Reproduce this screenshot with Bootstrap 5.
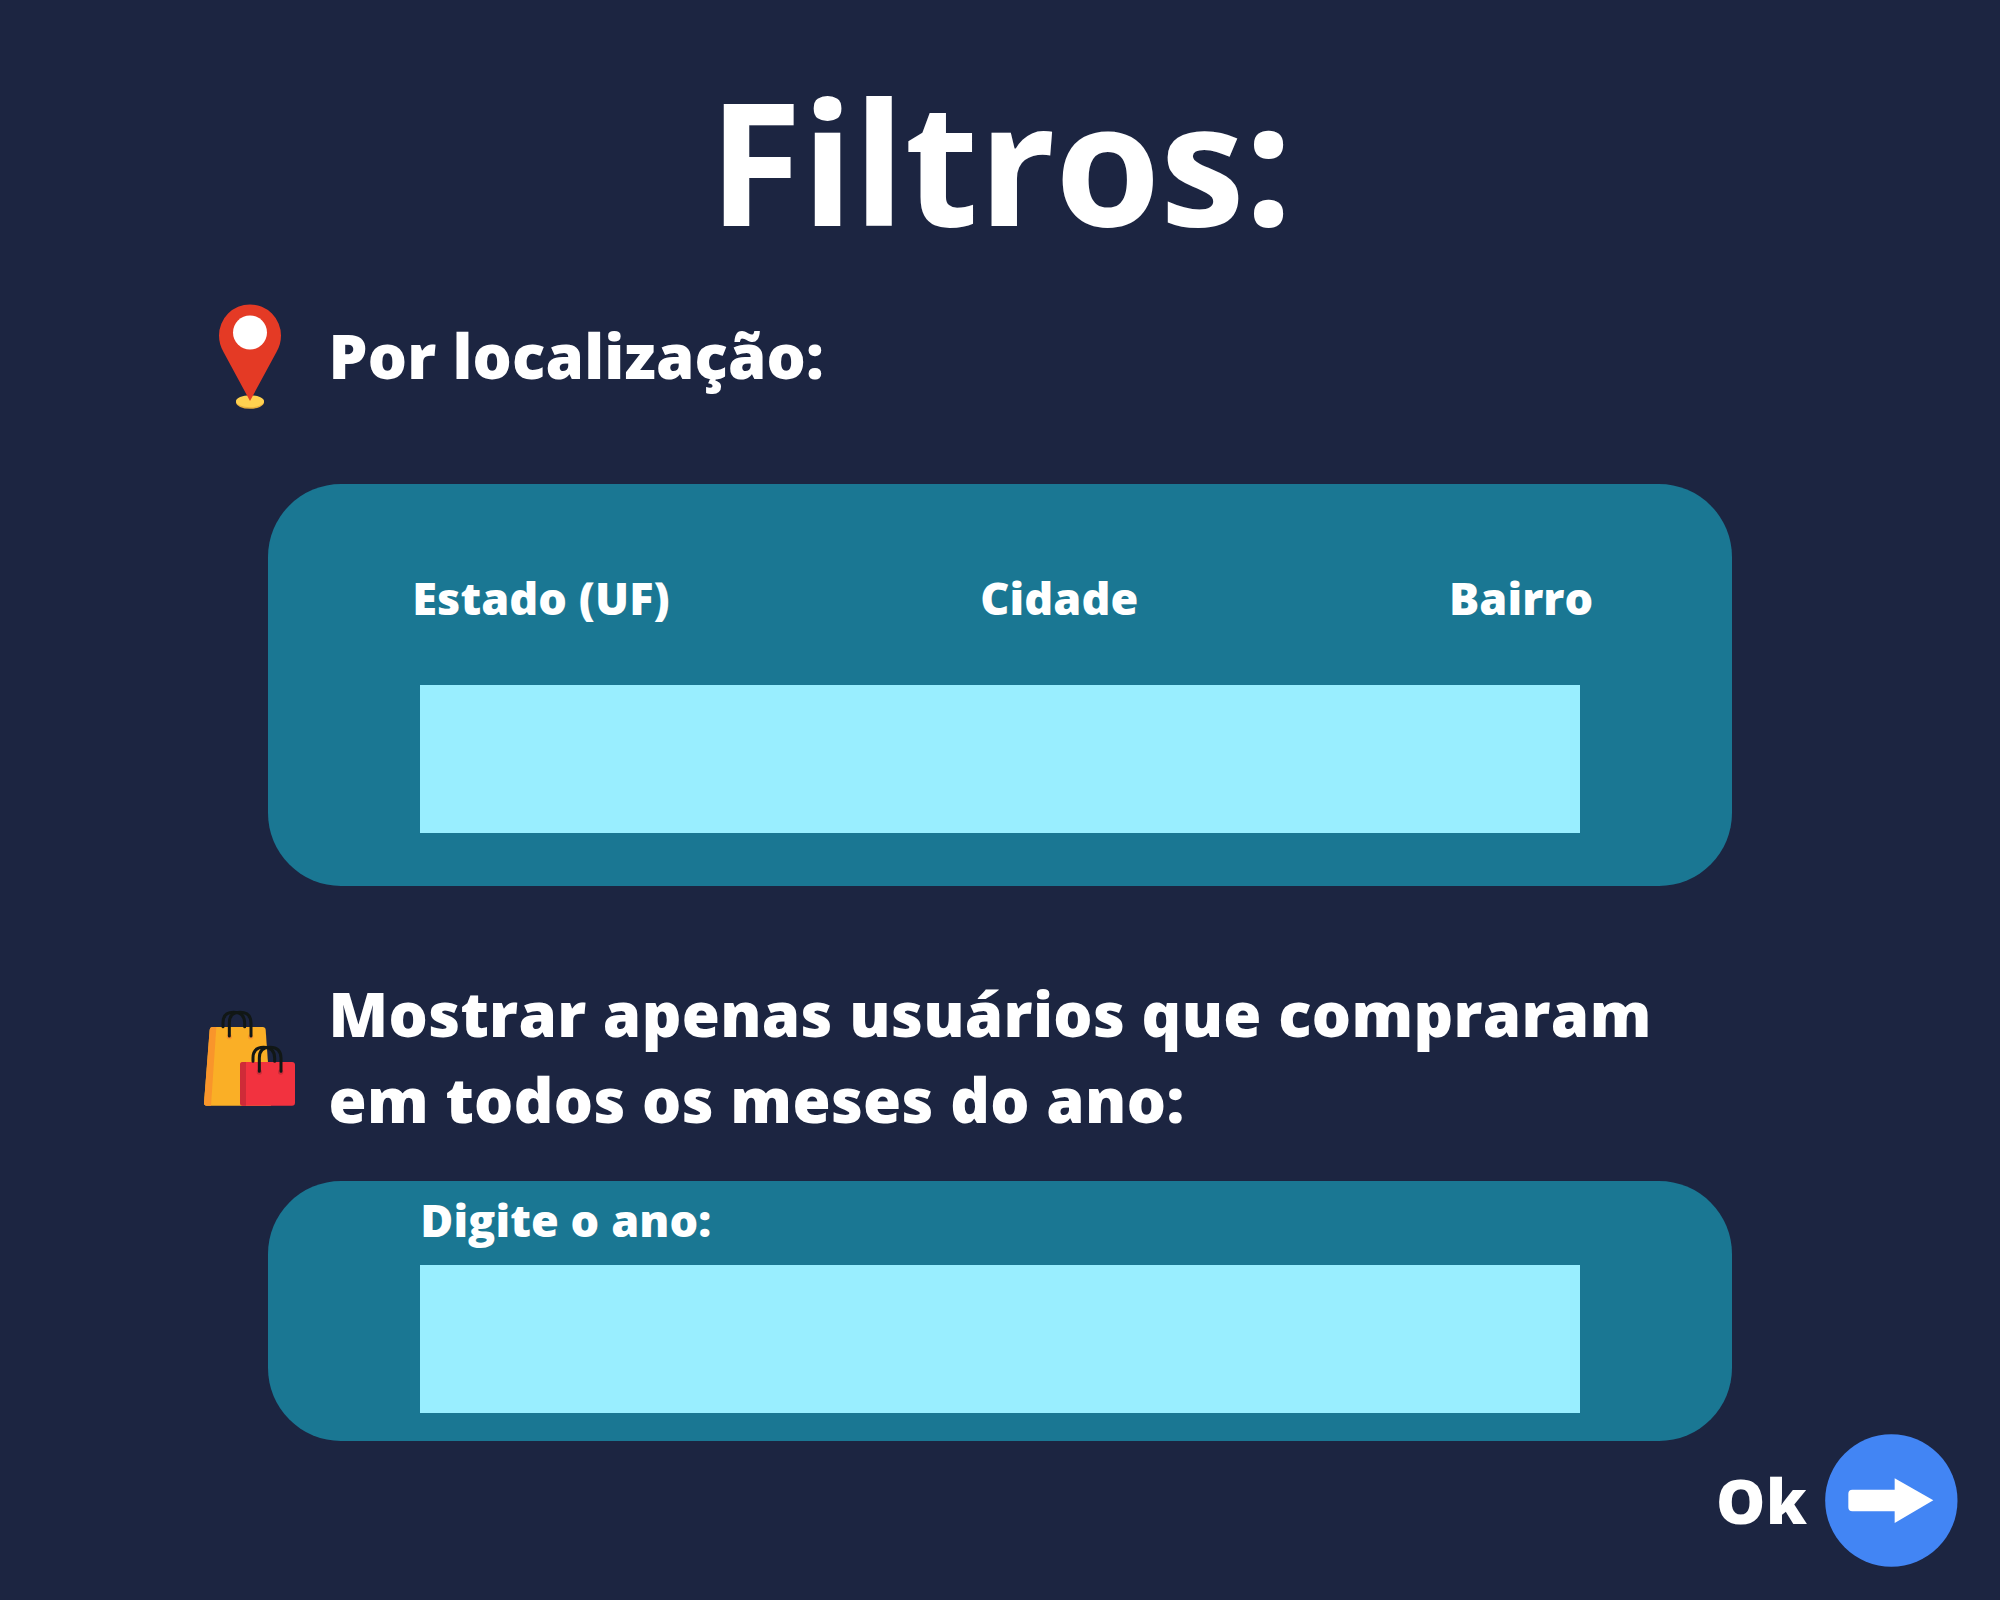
<!DOCTYPE html>
<html lang="pt-BR">
<head>
<meta charset="utf-8">
<title>Filtros</title>
<link href="https://cdn.jsdelivr.net/npm/bootstrap@5.3.0/dist/css/bootstrap.min.css" rel="stylesheet">
<style>
body{background:#1c2541;color:#fff;font-family:"Open Sans",sans-serif;width:2000px;height:1600px;overflow:hidden}
.page-title{font-size:170.5px;font-weight:700;line-height:200px;padding:60px 0 0 1px;letter-spacing:-.5px}
.section-head{height:224px;padding:44px 0 0 204px}
.section-head.second{height:295px;padding-top:84px}
.section-head svg{width:92px;flex:none}
.section-head h2{font-size:61.7px;font-weight:800;line-height:86px;margin:8px 0 0 32.5px;letter-spacing:.18px}
.section-head.second h2{margin-top:0;letter-spacing:.35px}
.bags-icon{margin-top:40px}
.panel{background:#1a7793;border-radius:73px;width:1464px;margin-left:268px;padding:0 151.7px 0 152.3px}
.panel-place{height:402px;padding-top:84px}
.panel-year{height:259.5px;padding-top:9px}
.field-label{font-size:45px;font-weight:800;line-height:60px;white-space:nowrap;letter-spacing:.08px}
.panel-year .field-label{margin-bottom:15px}
.field-row{margin:0 -13px 57px -8px}
.field-box{height:148px;background:#99eeff;border:0;border-radius:0}
.ok-row{margin-top:-6.5px;padding-right:42.5px}
.ok-btn{font-size:62px;font-weight:800;line-height:86px;color:#fff;border:0;padding:0;gap:17px;letter-spacing:.6px}
.ok-btn span{padding-bottom:2px}
</style>
</head>
<body>
<main class="d-flex flex-column h-100">
  <h1 class="page-title text-center m-0">Filtros:</h1>
  <div class="section-head d-flex align-items-start">
    <svg height="106" viewBox="0 0 92 106"><ellipse cx="46" cy="98.300" rx="14" ry="6.500" fill="#e9b03d"/><ellipse cx="46" cy="97.300" rx="14" ry="6" fill="#ffd150"/><path d="M46 0.500a31 31 0 0 1 31 31c0 6-1.500 11-4.500 16.500L46 97 19.500 48C16.500 42.500 15 37.500 15 31.500a31 31 0 0 1 31-31z" fill="#e43a25"/><circle cx="46" cy="28.500" r="17" fill="#fff"/></svg>
    <h2>Por localização:</h2>
  </div>
  <section class="panel panel-place">
    <div class="field-row d-flex justify-content-between">
      <label class="field-label" for="place">Estado (UF)</label>
      <label class="field-label" for="place">Cidade</label>
      <label class="field-label" for="place">Bairro</label>
    </div>
    <input id="place" class="field-box d-block w-100">
  </section>
  <div class="section-head second d-flex align-items-start">
    <svg class="bags-icon" height="96" viewBox="42 30 276 288">
      <path d="M68 81H218q8 0 9 8L243 317H50q-8 0-8-8L59 90q1-9 9-9z" fill="#faaf26"/>
      <path d="M68 81h11L63 317H50q-8 0-8-8L59 90q1-9 9-9z" fill="#f9952b"/>
      <circle cx="118" cy="110" r="8" fill="#f9952b"/><circle cx="182" cy="110" r="8" fill="#f9952b"/>
      <g fill="none" stroke="#111715" stroke-width="9" stroke-linecap="round">
        <path d="M99 80V68Q99 37 131 37T164 68V80"/>
        <path d="M118 108V68Q118 37 150 37T183 68V108"/>
      </g>
      <path d="M159 186H306q9 0 9 9V308q0 9-9 9H159q-9 0-9-9V195q0-9 9-9z" fill="#f2323f"/>
      <path d="M159 186H168V317H159q-9 0-9-9V195q0-9 9-9z" fill="#cf2b38"/>
      <circle cx="208" cy="216" r="8" fill="#cf2b38"/><circle cx="272" cy="216" r="8" fill="#cf2b38"/>
      <g fill="none" stroke="#111715" stroke-width="9" stroke-linecap="round">
        <path d="M189 184V174Q189 142 221 142T254 174V184"/>
        <path d="M208 214V174Q208 142 240 142T273 174V214"/>
      </g>
    </svg>
    <h2>Mostrar apenas usuários que compraram<br>em todos os meses do ano:</h2>
  </div>
  <section class="panel panel-year">
    <label class="field-label d-block" for="year">Digite o ano:</label>
    <input id="year" class="field-box d-block w-100">
  </section>
  <div class="ok-row d-flex justify-content-end">
    <button class="btn ok-btn d-flex align-items-center"><span>Ok</span>
      <svg width="133" height="133" viewBox="375 43 399 399"><circle cx="574" cy="242.500" r="198.500" fill="#4285f4"/><path d="M457 210H584V176L700 242 584 310V275H457q-12 0-12-12V222q0-12 12-12z" fill="#fff"/></svg>
    </button>
  </div>
</main>
<script src="https://cdn.jsdelivr.net/npm/bootstrap@5.3.0/dist/js/bootstrap.bundle.min.js"></script>
</body>
</html>
